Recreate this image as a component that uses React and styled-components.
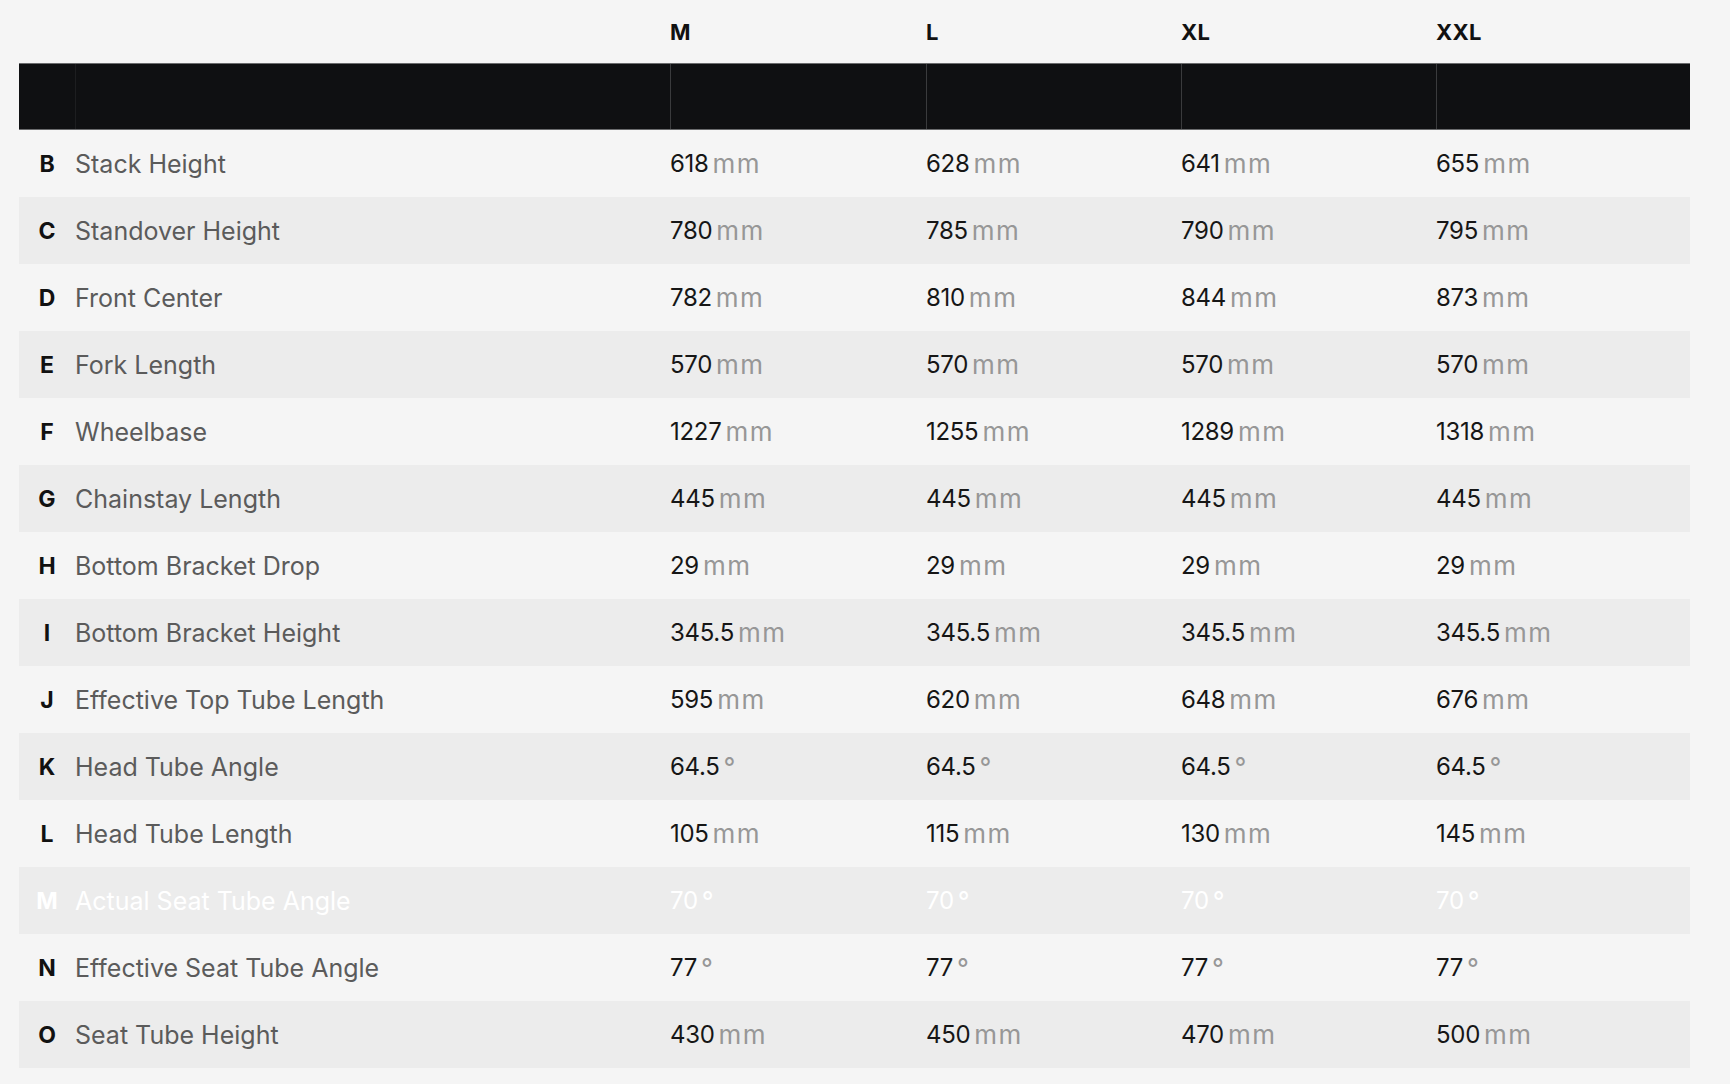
import React from "react";
import styled, { createGlobalStyle } from "styled-components";

const Global = createGlobalStyle`
  html, body { margin: 0; padding: 0; background: #f5f5f5; }
  body { font-family: Inter, "Open Sans", "Liberation Sans", sans-serif; }
`;

const Page = styled.div`
  width: 1730px;
  height: 1084px;
  box-sizing: border-box;
  padding-left: 19px;
  background: #f5f5f5;
  overflow: hidden;
`;

const Table = styled.div`
  width: 1671px;
  display: flex;
  flex-direction: column;
`;

const Grid = styled.div`
  display: grid;
  grid-template-columns: 56px 595px 256px 255px 255px 254px;
  align-items: stretch;
`;

const HeadRow = styled(Grid)`
  height: 63px;
`;

const HeadCell = styled.div`
  display: flex;
  align-items: center;
  font-weight: 700;
  font-size: 22px;
  color: #111;
  letter-spacing: 0.2px;
`;

const Band = styled(Grid)`
  height: 67px;
  box-sizing: border-box;
  background: #0f1012;
  border-top: 1px solid #6a6b6d;
  border-bottom: 1px solid #6a6b6d;
`;

const BandCell = styled.div`
  border-left: ${(p) => (p.$first ? "none" : `1px solid ${p.$soft ? "#1d1e20" : "#3a3b3d"}`)};
`;

const Row = styled(Grid)`
  height: 67px;
  background: ${(p) => (p.$alt ? "#ececec" : "#f5f5f5")};
`;

const Letter = styled.div`
  display: flex;
  align-items: center;
  justify-content: center;
  font-weight: 700;
  font-size: 23px;
  color: ${(p) => (p.$faded ? "#ffffff" : "#111")};
`;

const Label = styled.div`
  display: flex;
  align-items: center;
  font-size: 25px;
  font-weight: 400;
  color: ${(p) => (p.$faded ? "#ffffff" : "#5b5b5b")};
`;

const Value = styled.div`
  display: flex;
  align-items: center;
  font-size: 24px;
  font-weight: 400;
  color: ${(p) => (p.$faded ? "#ffffff" : "#161616")};
  letter-spacing: -0.3px;
`;

const Unit = styled.span`
  margin-left: 4px;
  font-size: 26px;
  letter-spacing: 1.5px;
  color: ${(p) => (p.$faded ? "#ffffff" : "#979797")};
  font-weight: 400;
`;

const sizes = ["M", "L", "XL", "XXL"];

const rows = [
  ["B", "Stack Height", ["618", "628", "641", "655"], "mm"],
  ["C", "Standover Height", ["780", "785", "790", "795"], "mm"],
  ["D", "Front Center", ["782", "810", "844", "873"], "mm"],
  ["E", "Fork Length", ["570", "570", "570", "570"], "mm"],
  ["F", "Wheelbase", ["1227", "1255", "1289", "1318"], "mm"],
  ["G", "Chainstay Length", ["445", "445", "445", "445"], "mm"],
  ["H", "Bottom Bracket Drop", ["29", "29", "29", "29"], "mm"],
  ["I", "Bottom Bracket Height", ["345.5", "345.5", "345.5", "345.5"], "mm"],
  ["J", "Effective Top Tube Length", ["595", "620", "648", "676"], "mm"],
  ["K", "Head Tube Angle", ["64.5", "64.5", "64.5", "64.5"], "°"],
  ["L", "Head Tube Length", ["105", "115", "130", "145"], "mm"],
  ["M", "Actual Seat Tube Angle", ["70", "70", "70", "70"], "°", true],
  ["N", "Effective Seat Tube Angle", ["77", "77", "77", "77"], "°"],
  ["O", "Seat Tube Height", ["430", "450", "470", "500"], "mm"],
];

export default function App() {
  return (
    <Page>
      <Global />
      <Table>
        <HeadRow>
          <HeadCell />
          <HeadCell />
          {sizes.map((s) => (
            <HeadCell key={s}>{s}</HeadCell>
          ))}
        </HeadRow>
        <Band>
          <BandCell $first />
          <BandCell $soft />
          <BandCell />
          <BandCell />
          <BandCell />
          <BandCell />
        </Band>
        {rows.map(([letter, label, vals, unit, faded], i) => (
          <Row key={letter} $alt={i % 2 === 1}>
            <Letter $faded={faded}>{letter}</Letter>
            <Label $faded={faded}>{label}</Label>
            {vals.map((v, j) => (
              <Value key={j} $faded={faded}>
                {v}
                <Unit $faded={faded}>{unit}</Unit>
              </Value>
            ))}
          </Row>
        ))}
      </Table>
    </Page>
  );
}
